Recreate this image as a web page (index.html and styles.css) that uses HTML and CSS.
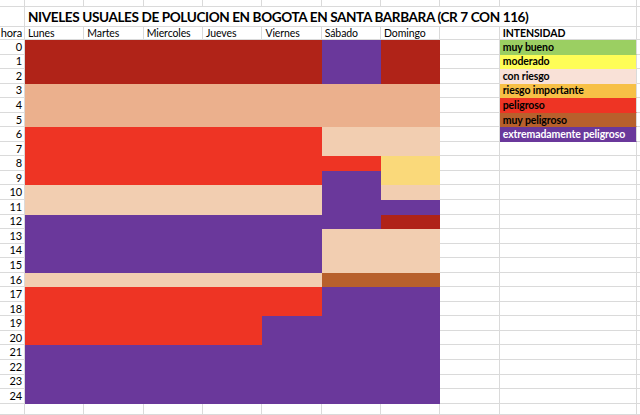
FILE: index.html
```html
<!DOCTYPE html>
<html lang="es">
<head>
<meta charset="utf-8">
<title>Niveles usuales de polución</title>
<link rel="stylesheet" href="styles.css">
</head>
<body>
<div class="sheet">
  <!-- partial top row -->
  <div class="c"></div><div class="c"></div><div class="c"></div><div class="c"></div><div class="c"></div><div class="c"></div><div class="c"></div><div class="c"></div><div class="c"></div><div class="c"></div><div class="c"></div>
  <!-- title row -->
  <div class="c"></div><div class="c title">NIVELES USUALES DE POLUCION EN BOGOTA EN SANTA BARBARA (CR 7 CON 116)</div><div class="c"></div>
  <!-- header row -->
  <div class="c h">hora</div><div class="c">Lunes</div><div class="c">Martes</div><div class="c">Miercoles</div><div class="c">Jueves</div><div class="c">Viernes</div><div class="c">Sábado</div><div class="c">Domingo</div><div class="c"></div><div class="c lg">INTENSIDAD</div><div class="c"></div>

  <div class="c h">0</div><div class="c dr s5"></div><div class="c pu"></div><div class="c dr"></div><div class="c"></div><div class="c lg l1">muy bueno</div><div class="c"></div>
  <div class="c h">1</div><div class="c dr s5"></div><div class="c pu"></div><div class="c dr"></div><div class="c"></div><div class="c lg l2">moderado</div><div class="c"></div>
  <div class="c h">2</div><div class="c dr s5"></div><div class="c pu"></div><div class="c dr"></div><div class="c"></div><div class="c lg l3">con riesgo</div><div class="c"></div>
  <div class="c h">3</div><div class="c sa s7"></div><div class="c"></div><div class="c lg l4">riesgo importante</div><div class="c"></div>
  <div class="c h">4</div><div class="c sa s7"></div><div class="c"></div><div class="c lg l5">peligroso</div><div class="c"></div>
  <div class="c h">5</div><div class="c sa s7"></div><div class="c"></div><div class="c lg l6">muy peligroso</div><div class="c"></div>
  <div class="c h">6</div><div class="c rd s5"></div><div class="c lp s2"></div><div class="c"></div><div class="c lg l7">extremadamente peligroso</div><div class="c"></div>
  <div class="c h">7</div><div class="c rd s5"></div><div class="c lp s2"></div><div class="c"></div><div class="c"></div><div class="c"></div>
  <div class="c h">8</div><div class="c rd s6"></div><div class="c ye"></div><div class="c"></div><div class="c"></div><div class="c"></div>
  <div class="c h">9</div><div class="c rd s5"></div><div class="c pu"></div><div class="c ye"></div><div class="c"></div><div class="c"></div><div class="c"></div>
  <div class="c h">10</div><div class="c lp s5"></div><div class="c pu"></div><div class="c lp"></div><div class="c"></div><div class="c"></div><div class="c"></div>
  <div class="c h">11</div><div class="c lp s5"></div><div class="c pu s2"></div><div class="c"></div><div class="c"></div><div class="c"></div>
  <div class="c h">12</div><div class="c pu s6"></div><div class="c dr"></div><div class="c"></div><div class="c"></div><div class="c"></div>
  <div class="c h">13</div><div class="c pu s5"></div><div class="c lp s2"></div><div class="c"></div><div class="c"></div><div class="c"></div>
  <div class="c h">14</div><div class="c pu s5"></div><div class="c lp s2"></div><div class="c"></div><div class="c"></div><div class="c"></div>
  <div class="c h">15</div><div class="c pu s5"></div><div class="c lp s2"></div><div class="c"></div><div class="c"></div><div class="c"></div>
  <div class="c h">16</div><div class="c lp s5"></div><div class="c br s2"></div><div class="c"></div><div class="c"></div><div class="c"></div>
  <div class="c h">17</div><div class="c rd s5"></div><div class="c pu s2"></div><div class="c"></div><div class="c"></div><div class="c"></div>
  <div class="c h">18</div><div class="c rd s5"></div><div class="c pu s2"></div><div class="c"></div><div class="c"></div><div class="c"></div>
  <div class="c h">19</div><div class="c rd s4"></div><div class="c pu s3"></div><div class="c"></div><div class="c"></div><div class="c"></div>
  <div class="c h">20</div><div class="c rd s4"></div><div class="c pu s3"></div><div class="c"></div><div class="c"></div><div class="c"></div>
  <div class="c h">21</div><div class="c pu s7"></div><div class="c"></div><div class="c"></div><div class="c"></div>
  <div class="c h">22</div><div class="c pu s7"></div><div class="c"></div><div class="c"></div><div class="c"></div>
  <div class="c h">23</div><div class="c pu s7"></div><div class="c"></div><div class="c"></div><div class="c"></div>
  <div class="c h">24</div><div class="c pu s7"></div><div class="c"></div><div class="c"></div><div class="c"></div>
  <!-- trailing partial row -->
  <div class="c"></div><div class="c"></div><div class="c"></div><div class="c"></div><div class="c"></div><div class="c"></div><div class="c"></div><div class="c"></div><div class="c"></div><div class="c"></div><div class="c"></div>
</div>
</body>
</html>
```

FILE: styles.css
```css
* {
  box-sizing: border-box;
}

html, body {
  margin: 0;
  padding: 0;
  background: #ffffff;
}

body {
  font-family: Lato, "Open Sans", "Liberation Sans", sans-serif;
  color: #000;
}

.sheet {
  display: grid;
  grid-template-columns: 25px repeat(8, 59.35px) 137px 1fr;
  grid-template-rows: 7px 20px 13px repeat(25, 14.56px) 1fr;
  width: 640px;
  height: 415px;
  overflow: hidden;
}

.c {
  border-right: 1px solid #dadada;
  border-bottom: 1px solid #dadada;
  font-size: 10.5px;
  letter-spacing: -0.1px;
  line-height: 12px;
  padding: 0 3px;
  white-space: nowrap;
  display: flex;
  align-items: center;
  min-width: 0;
}

.h {
  justify-content: flex-end;
  padding-right: 2px;
  font-size: 11px;
}

.title {
  grid-column: 2 / 11;
  font-weight: 700;
  font-size: 13.6px;
  letter-spacing: -0.4px;
  padding-left: 3px;
  padding-top: 1px;
}

.s2 { grid-column: span 2; }
.s3 { grid-column: span 3; }
.s4 { grid-column: span 4; }
.s5 { grid-column: span 5; }
.s6 { grid-column: span 6; }
.s7 { grid-column: span 7; }

.dr { background: #b02318; border-color: #b02318; }
.sa { background: #ebb08d; border-color: #ebb08d; }
.rd { background: #ee3424; border-color: #ee3424; }
.lp { background: #f2ceb1; border-color: #f2ceb1; }
.pu { background: #6a389b; border-color: #6a389b; }
.ye { background: #fad97a; border-color: #fad97a; }
.br { background: #b8602c; border-color: #b8602c; }

.lg {
  font-weight: 700;
  padding-left: 3px;
}

.l1 { background: #9bcf62; border-bottom-color: #9bcf62; }
.l2 { background: #fefd57; border-bottom-color: #fefd57; }
.l3 { background: #f9e1d7; border-bottom-color: #f9e1d7; }
.l4 { background: #f7c046; border-bottom-color: #f7c046; }
.l5 { background: #ee3424; border-bottom-color: #ee3424; }
.l6 { background: #b8602c; border-bottom-color: #b8602c; }
.l7 { background: #6a389b; border-bottom-color: #6a389b; color: #fff; }
```
